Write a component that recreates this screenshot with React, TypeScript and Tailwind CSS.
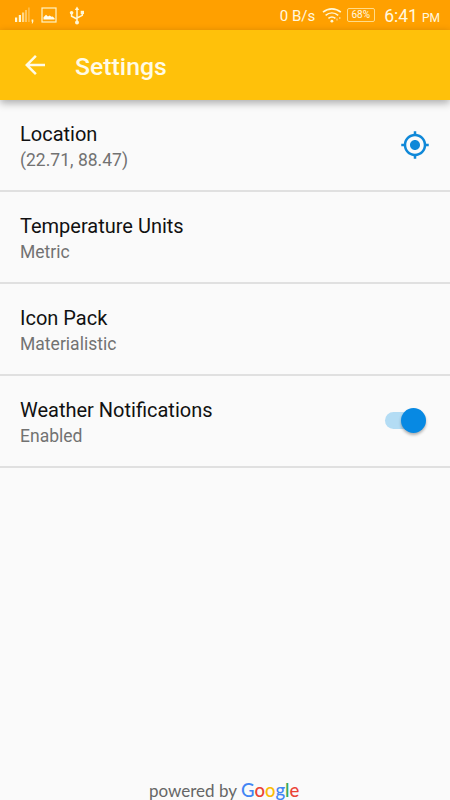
import React from 'react';

interface SettingRowProps {
  title: string;
  summary: string;
  children?: React.ReactNode;
}

function SettingRow({ title, summary, children }: SettingRowProps) {
  return (
    <div className="flex h-[92px] items-start justify-between border-b-2 border-[#e0e0e0] pl-5">
      <div className="pt-[22px]">
        <h2 className="text-[20px] leading-[25px] text-[#111111]">{title}</h2>
        <p className="pt-px text-[17.5px] leading-[25px] tracking-[0.02px] text-[#727272]">{summary}</p>
      </div>
      {children}
    </div>
  );
}

function SignalIcon() {
  return (
    <svg width="20" height="18" viewBox="0 0 20 18" fill="#fff7d6">
      <rect x="0" y="11.5" width="2.2" height="4.5" />
      <rect x="3.8" y="9" width="2.2" height="7" />
      <rect x="7" y="6.5" width="2.2" height="9.5" opacity=".65" />
      <rect x="10" y="4" width="2" height="12" opacity=".45" />
      <rect x="13" y="1.5" width="1.8" height="14.5" opacity=".3" />
      <path d="M16.6 13.5h1.7v2.2l-.8 1.8h-.8l.5-1.8h-.6z" />
    </svg>
  );
}

function PictureIcon() {
  return (
    <svg width="16" height="16" viewBox="0 0 16 16" fill="none">
      <rect x="1" y="1" width="14" height="14" stroke="#fff3c4" strokeWidth="1.2" />
      <path d="M2.5 12.5V10.2L5 7.8l2 1.8 1.6-1.2 2 1.4 1-.2 2 1.6v1.3z" fill="#fffdf0" />
    </svg>
  );
}

function UsbIcon() {
  return (
    <svg width="16" height="19" viewBox="0 0 16 19" fill="#fff7d6" stroke="#fff7d6">
      <path d="M8 16V3.5M8 13 2.6 10.2V7.5M8 12l5.3-2.6V6.5" fill="none" strokeWidth="1.5" />
      <path d="M8 .4 10.2 4H5.8z" stroke="none" />
      <circle cx="8" cy="16.5" r="2" stroke="none" />
      <circle cx="2.6" cy="6.7" r="1.8" stroke="none" />
      <rect x="11.7" y="4.8" width="3.3" height="3.3" stroke="none" />
    </svg>
  );
}

function WifiIcon() {
  return (
    <svg width="20" height="17" viewBox="0 0 20 17" fill="none" stroke="#fff7d6" strokeWidth="1.6">
      <path d="M1 5.2c5.2-4.5 12.6-4.5 17.8 0" />
      <path d="M3.6 8.4c3.8-3.2 8.8-3.2 12.6 0" />
      <path d="M6.4 11.4c2.2-1.8 4.8-1.8 7 0" />
      <circle cx="9.9" cy="14.2" r="1.4" fill="#fff7d6" stroke="none" />
      <path d="M15 11.5v3M17.8 10v3" strokeWidth="1.1" strokeDasharray="2 1" opacity=".7" />
    </svg>
  );
}

function StatusBar() {
  return (
    <div className="flex h-[30px] items-center bg-[#ffa000] text-[#fff9e0]">
      <div className="flex items-center pl-[15px]">
        <SignalIcon />
        <div className="ml-[6px]"><PictureIcon /></div>
        <div className="ml-[12px]"><UsbIcon /></div>
      </div>
      <div className="ml-auto flex items-center pr-[10px]">
        <span className="pt-[2px] text-[15px] leading-none">0 B/s</span>
        <div className="ml-[7px]"><WifiIcon /></div>
        <span className="ml-[5px] flex h-[14px] w-[28px] items-center justify-center rounded-[2px] border border-[#ffdc8a] pr-px text-[10px] leading-none">
          68%
        </span>
        <span className="ml-[9px] flex items-baseline pt-[3px] leading-none">
          <span className="text-[17.5px]">6:41</span>
          <span className="ml-[4px] text-[12px]">PM</span>
        </span>
      </div>
    </div>
  );
}

function AppBar() {
  return (
    <header className="relative flex h-[70px] items-center bg-[#ffc10a] text-[#fffbe6] shadow-[0_3px_8px_rgba(0,0,0,0.32)]">
      <svg className="ml-[20px]" width="30" height="30" viewBox="0 0 24 24" fill="currentColor">
        <path d="M20 11H7.83l5.59-5.59L12 4l-8 8 8 8 1.41-1.41L7.83 13H20v-2z" />
      </svg>
      <h1 className="ml-[25px] pt-[5px] text-[24.8px] leading-none font-medium">Settings</h1>
    </header>
  );
}

function LocationIcon() {
  return (
    <svg className="mt-[30px] mr-5" width="30" height="30" viewBox="0 0 24 24" fill="#0f88d8">
      <path d="M12 8c-2.21 0-4 1.79-4 4s1.79 4 4 4 4-1.79 4-4-1.79-4-4-4zm8.94 3c-.46-4.17-3.77-7.48-7.94-7.94V1h-2v2.06C6.83 3.52 3.52 6.83 3.06 11H1v2h2.06c.46 4.17 3.77 7.48 7.94 7.94V23h2v-2.06c4.17-.46 7.48-3.77 7.94-7.94H23v-2h-2.06zM12 19c-3.87 0-7-3.13-7-7s3.13-7 7-7 7 3.13 7 7-3.13 7-7 7z" />
    </svg>
  );
}

function Toggle() {
  return (
    <div className="mt-[31px] mr-6 flex h-[26px] w-[41px] items-center rounded-full">
      <div className="h-[17px] w-[34px] shrink-0 rounded-full bg-[#b3dcf4]" />
      <div className="-ml-[18px] h-[25px] w-[25px] shrink-0 rounded-full bg-[#0789e3] shadow-[0_2px_3px_rgba(0,0,0,0.3)]" />
    </div>
  );
}

function PoweredBy() {
  return (
    <footer className="mt-auto flex h-[22px] items-baseline pl-[149px] font-['Lato',sans-serif] leading-[24px]">
      <span className="text-[17px] text-[#666666]">powered by</span>
      <span className="ml-[4px] text-[18.5px] font-medium">
        <span className="text-[#4285f4]">G</span>
        <span className="text-[#ea4335]">o</span>
        <span className="text-[#fbbc05]">o</span>
        <span className="text-[#4285f4]">g</span>
        <span className="text-[#34a853]">l</span>
        <span className="text-[#ea4335]">e</span>
      </span>
    </footer>
  );
}

export default function App() {
  return (
    <div className="flex h-[800px] w-[450px] flex-col overflow-hidden bg-[#fafafa] font-['Roboto',sans-serif]">
      <StatusBar />
      <AppBar />
      <main>
        <SettingRow title="Location" summary="(22.71, 88.47)">
          <LocationIcon />
        </SettingRow>
        <SettingRow title="Temperature Units" summary="Metric" />
        <SettingRow title="Icon Pack" summary="Materialistic" />
        <SettingRow title="Weather Notifications" summary="Enabled">
          <Toggle />
        </SettingRow>
      </main>
      <PoweredBy />
    </div>
  );
}
